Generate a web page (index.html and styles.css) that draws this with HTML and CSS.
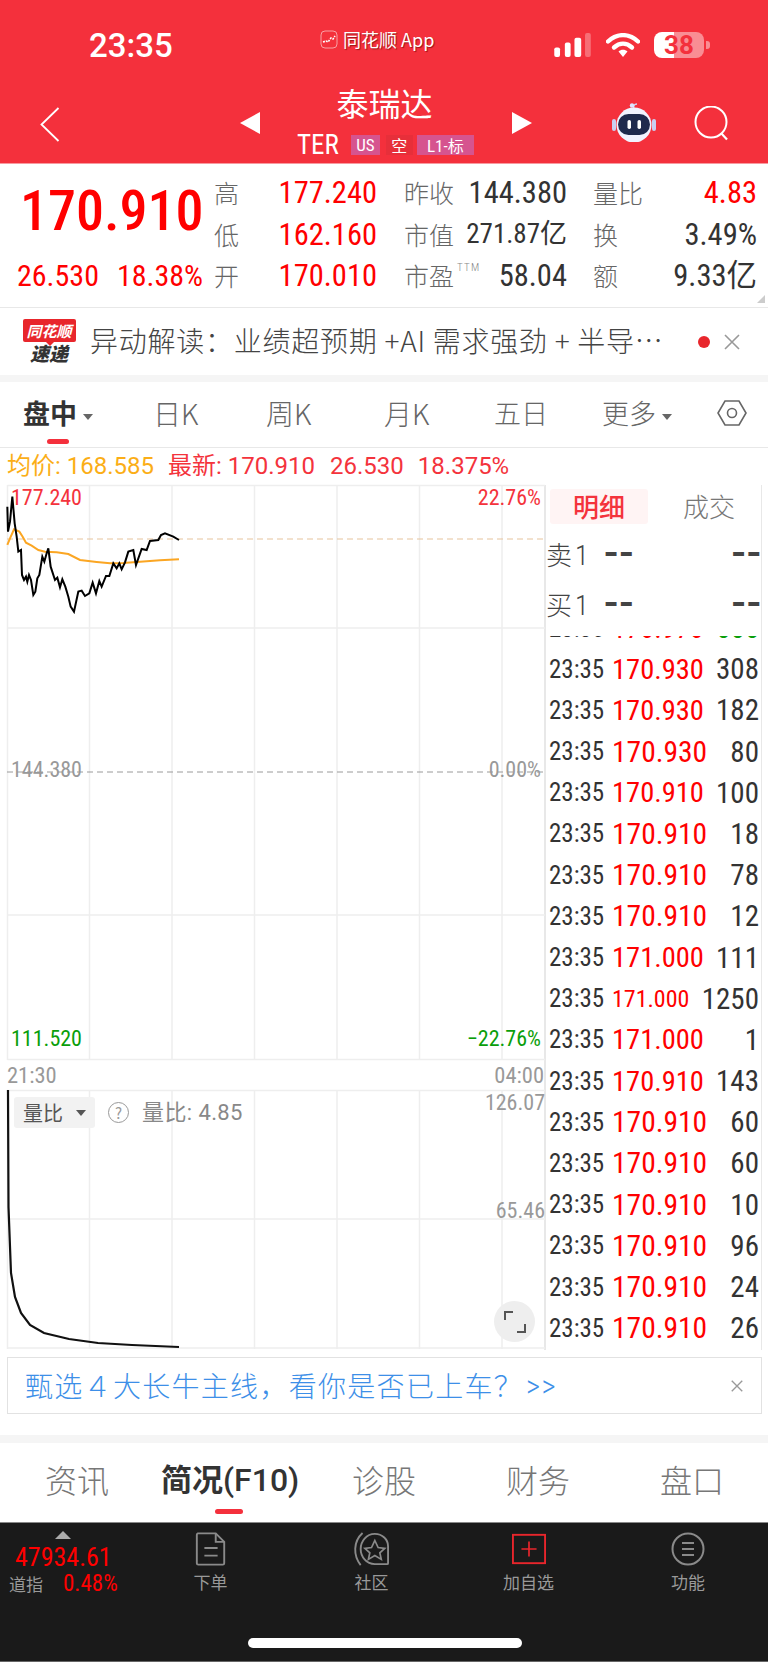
FILE: index.html
```html
<!DOCTYPE html>
<html lang="zh-CN">
<head>
<meta charset="utf-8">
<title>泰瑞达</title>
<link rel="stylesheet" href="styles.css">
</head>
<body>
<div class="phone">
  <header class="top">
    <div class="status">
      <span class="clock num">23:35</span>
      <span class="carrier">
        <svg class="carrier-ico" viewBox="0 0 18 19"><rect x="1" y="1" width="16" height="17" rx="4" fill="#f4303c" stroke="#f7a0a5" stroke-width="1"/><path d="M3 12l3-1 2 1 3-4 2 1 2-3" fill="none" stroke="#fff" stroke-width="1.6" stroke-dasharray="2 1"/></svg>
        <span class="carrier-txt">同花顺 App</span>
      </span>
      <span class="sys">
        <svg class="sig" viewBox="0 0 40 26"><rect x="0" y="15" width="6" height="10" rx="2" fill="#fff"/><rect x="11" y="10" width="6" height="15" rx="2" fill="#fff"/><rect x="21" y="5" width="7" height="20" rx="2" fill="#fff"/><rect x="32" y="0" width="6" height="25" rx="2" fill="#fff" opacity=".3"/></svg>
        <svg class="wifi" viewBox="0 0 34 24"><path d="M2 8.500C11 0 23 0 32 8.500" fill="none" stroke="#fff" stroke-width="4.400" stroke-linecap="round"/><path d="M8 14.500c5.500-5 12.500-5 18 0" fill="none" stroke="#fff" stroke-width="4.400" stroke-linecap="round"/><path d="M12.500 18.500c2.500-2.300 6.500-2.300 9 0L17 24z" fill="#fff"/></svg>
        <span class="batt num">38</span><span class="batt-tip"></span>
      </span>
    </div>
    <div class="nav">
      <svg class="back" viewBox="0 0 20 34"><path d="M18.500 .5L1.500 17l17 16.500" fill="none" stroke="#fff" stroke-width="1.800"/></svg>
      <div class="title-wrap">
        <span class="tri-l"></span>
        <div class="title">
          <div class="name">泰瑞达</div>
          <div class="sub">
            <span class="ter num">TER</span>
            <span class="badge b-us num">US</span>
            <span class="badge b-kong">空</span>
            <span class="badge b-l1"><span class="num">L1-</span>标</span>
          </div>
        </div>
        <span class="tri-r"></span>
      </div>
      <svg class="robot" viewBox="0 0 44 40">
        <path d="M22 7c-1-3 0-5 3-5" fill="none" stroke="#cfd6f5" stroke-width="1.500"/>
        <circle cx="20" cy="3.500" r="2.200" fill="#dfe5ff"/>
        <rect x="0" y="17" width="4" height="12" rx="2" fill="#c9cff2"/>
        <rect x="40" y="17" width="4" height="12" rx="2" fill="#c9cff2"/>
        <circle cx="22" cy="23" r="17.500" fill="#f1f3ff"/>
        <rect x="6" y="12" width="32" height="21" rx="10.500" fill="#1f2a4d"/>
        <rect x="15.500" y="18" width="3.500" height="9" rx="1.700" fill="#fff"/>
        <rect x="25.500" y="18" width="3.500" height="9" rx="1.700" fill="#fff"/>
      </svg>
      <svg class="search" viewBox="0 0 36 36"><circle cx="17" cy="16" r="15.500" fill="none" stroke="#fff" stroke-width="2"/><path d="M27 27l6 6.500" stroke="#fff" stroke-width="2.200" fill="none"/></svg>
    </div>
  </header>

  <section class="stats">
    <div class="big num">170.910</div>
    <div class="chg num"><span>26.530</span><span>18.38%</span></div>
    <div class="cell c1 r1"><span class="lab">高</span><span class="val red num">177.240</span></div>
    <div class="cell c2 r1"><span class="lab">昨收</span><span class="val num">144.380</span></div>
    <div class="cell c3 r1"><span class="lab">量比</span><span class="val red num">4.83</span></div>
    <div class="cell c1 r2"><span class="lab">低</span><span class="val red num">162.160</span></div>
    <div class="cell c2 r2"><span class="lab">市值</span><span class="val val-sm num">271.87亿</span></div>
    <div class="cell c3 r2"><span class="lab">换</span><span class="val num">3.49%</span></div>
    <div class="cell c1 r3"><span class="lab">开</span><span class="val red num">170.010</span></div>
    <div class="cell c2 r3"><span class="lab">市盈<sup class="ttm num">TTM</sup></span><span class="val num">58.04</span></div>
    <div class="cell c3 r3"><span class="lab">额</span><span class="val num">9.33亿</span></div>
    <span class="corner"></span>
  </section>

  <section class="news">
    <div class="logo"><span class="logo-a">同花顺</span><span class="logo-b">速递</span></div>
    <div class="news-txt">异动解读：业绩超预期 +AI 需求强劲 + 半导…</div>
    <span class="dot"></span>
    <svg class="close" viewBox="0 0 16 16"><path d="M1 1l14 14M15 1L1 15" stroke="#999" stroke-width="1.600"/></svg>
  </section>
  <div class="band"></div>

  <nav class="ctabs">
    <span class="ctab on t1">盘中<i class="caret"></i><b class="bar"></b></span>
    <span class="ctab t2">日K</span>
    <span class="ctab t3">周K</span>
    <span class="ctab t4">月K</span>
    <span class="ctab t5">五日</span>
    <span class="ctab t6">更多<i class="caret"></i></span>
    <svg class="hex" viewBox="0 0 30 26"><path d="M8 1h14l7 12-7 12H8L1 13z" fill="none" stroke="#666" stroke-width="1.600"/><circle cx="15" cy="13" r="4.500" fill="none" stroke="#666" stroke-width="1.600"/></svg>
  </nav>

  <div class="legend">
    <span class="amber l1">均价: 168.585</span>
    <span class="rd l2">最新: 170.910</span>
    <span class="rd l3">26.530</span>
    <span class="rd l4">18.375%</span>
  </div>

  <main class="main">
    <div class="charts">
      <div class="price-chart">
        <svg class="chart-svg" viewBox="0 485 538 575">
          <g stroke="#eee" stroke-width="1.500" fill="none">
            <path d="M.5 485.500H538M.5 628H538M.5 915H538M.5 1059.500H538"/>
            <path d="M.5 485V1060M82.500 485V1060M165 485V1060M247.500 485V1060M330 485V1060M412.500 485V1060M495 485V1060"/>
          </g>
          <path d="M0 539H538" stroke="#e6c39c" stroke-width="1" stroke-dasharray="6 4"/>
          <path d="M0 772H538" stroke="#9a9a9a" stroke-width="1" stroke-dasharray="6 4"/>
          <g transform="translate(0 480) scale(.3333) translate(-21 0)">
            <path d="M22 195L30 175L42 148L58 155L68 170L78 188L95 197L115 210L135 215L170 217L205 222L240 240L290 246L330 250L370 249L420 245L480 241L537 238" fill="none" stroke="#fba623" stroke-width="6"/>
            <path d="M22 80L24 155L30 125L37 50L44 130L50 170L55 215L63 210L66 285L72 300L78 290L82 305L87 285L93 300L100 345L106 335L112 295L118 285L127 230L133 245L140 220L145 205L152 260L165 300L172 293L180 322L187 298L196 320L205 350L212 380L222 395L235 335L245 332L255 348L268 340L278 308L288 340L298 303L305 320L318 288L328 288L340 250L350 265L358 250L365 268L375 247L385 215L400 210L408 255L425 207L440 210L450 183L475 180L483 165L495 160L520 170L537 180" fill="none" stroke="#000" stroke-width="6"/>
          </g>
        </svg>
        <span class="pl num rd pl-top">177.240</span>
        <span class="pr num rd pl-top">22.76%</span>
        <span class="pl num gy pl-mid">144.380</span>
        <span class="pr num gy pl-mid">0.00%</span>
        <span class="pl num gr pl-bot">111.520</span>
        <span class="pr num gr pl-bot">−22.76%</span>
      </div>
      <div class="axis num"><span>21:30</span><span>04:00</span></div>
      <div class="vol-chart">
        <svg class="chart-svg" viewBox="0 1090 538 259">
          <g stroke="#eee" stroke-width="1.500" fill="none">
            <path d="M0 1090.500H538M0 1219H538M0 1348H538"/>
            <path d="M.5 1090V1349M82.500 1090V1349M165 1090V1349M247.500 1090V1349M330 1090V1349M412.500 1090V1349M495 1090V1349"/>
          </g>
          <path d="M1 1090L1.500 1207L4 1273L8 1297L14 1313L23 1325L37 1333L62 1339L91 1343L125 1345L172 1347" fill="none" stroke="#111" stroke-width="2.200"/>
        </svg>
        <span class="vselect"><span>量比</span><i class="caret dark"></i></span>
        <span class="vhelp">?</span>
        <span class="vtxt">量比: 4.85</span>
        <span class="vy vy1 num">126.07</span>
        <span class="vy vy2 num">65.46</span>
        <span class="expand"><svg viewBox="0 0 22 22"><path d="M9 1H1v8M13 21h8v-8" fill="none" stroke="#555" stroke-width="2"/></svg></span>
      </div>
    </div>
    <aside class="panel">
      <div class="ptabs"><span class="ptab on">明细</span><span class="ptab">成交</span></div>
      <div class="quote q1"><span class="qlab">卖<span class="num">1</span></span><span class="dash">--</span><span class="dash end">--</span></div>
      <div class="quote q2"><span class="qlab">买<span class="num">1</span></span><span class="dash">--</span><span class="dash end">--</span></div>
      <div class="ticks num">
        <div class="ticks-in">
          <div class="tick"><span class="tm">23:35</span><span class="pr-s">170.970</span><span class="vl gn">555</span></div>
          <div class="tick"><span class="tm">23:35</span><span class="pr-s">170.930</span><span class="vl">308</span></div>
          <div class="tick"><span class="tm">23:35</span><span class="pr-s">170.930</span><span class="vl">182</span></div>
          <div class="tick"><span class="tm">23:35</span><span class="pr-l">170.930</span><span class="vl">80</span></div>
          <div class="tick"><span class="tm">23:35</span><span class="pr-s">170.910</span><span class="vl">100</span></div>
          <div class="tick"><span class="tm">23:35</span><span class="pr-l">170.910</span><span class="vl">18</span></div>
          <div class="tick"><span class="tm">23:35</span><span class="pr-l">170.910</span><span class="vl">78</span></div>
          <div class="tick"><span class="tm">23:35</span><span class="pr-l">170.910</span><span class="vl">12</span></div>
          <div class="tick"><span class="tm">23:35</span><span class="pr-s">171.000</span><span class="vl">111</span></div>
          <div class="tick"><span class="tm">23:35</span><span class="pr-xs">171.000</span><span class="vl">1250</span></div>
          <div class="tick"><span class="tm">23:35</span><span class="pr-s">171.000</span><span class="vl">1</span></div>
          <div class="tick"><span class="tm">23:35</span><span class="pr-s">170.910</span><span class="vl">143</span></div>
          <div class="tick"><span class="tm">23:35</span><span class="pr-l">170.910</span><span class="vl">60</span></div>
          <div class="tick"><span class="tm">23:35</span><span class="pr-l">170.910</span><span class="vl">60</span></div>
          <div class="tick"><span class="tm">23:35</span><span class="pr-l">170.910</span><span class="vl">10</span></div>
          <div class="tick"><span class="tm">23:35</span><span class="pr-l">170.910</span><span class="vl">96</span></div>
          <div class="tick"><span class="tm">23:35</span><span class="pr-l">170.910</span><span class="vl">24</span></div>
          <div class="tick"><span class="tm">23:35</span><span class="pr-l">170.910</span><span class="vl">26</span></div>
        </div>
      </div>
    </aside>
  </main>

  <div class="promo">
    <span class="promo-txt">甄选４大长牛主线，看你是否已上车？<span class="gt num">&gt;&gt;</span></span>
    <svg class="close" viewBox="0 0 16 16"><path d="M2 2l12 12M14 2L2 14" stroke="#999" stroke-width="1.600"/></svg>
  </div>

  <div class="band band2"></div>
  <nav class="btabs">
    <span class="btab b1">资讯</span>
    <span class="btab b2 on">简况<span class="f10 num">(F10)</span><b class="bar2"></b></span>
    <span class="btab b3">诊股</span>
    <span class="btab b4">财务</span>
    <span class="btab b5">盘口</span>
  </nav>

  <footer class="dock">
    <div class="dock-row">
      <div class="index">
        <span class="up"></span>
        <span class="ix-val num">47934.61</span>
        <span class="ix-sub"><span>道指</span><span class="ix-pct num">0.48%</span></span>
      </div>
      <div class="act">
        <svg class="ico" viewBox="0 0 32 36"><path d="M2 1.500h19l9 9V33a1.500 1.500 0 0 1-1.500 1.500h-26A1.500 1.500 0 0 1 1 33V3a1.500 1.500 0 0 1 1-1.500z" fill="none" stroke="#8a8a8a" stroke-width="2"/><path d="M21 1.500V10.500h9M9 17h14M9 25h14" fill="none" stroke="#8a8a8a" stroke-width="2"/></svg>
        <span>下单</span>
      </div>
      <div class="act">
        <svg class="ico" viewBox="0 0 38 36"><path d="M7 35C-1 25 -1 10 9 1" fill="none" stroke="#8a8a8a" stroke-width="2"/><path d="M22 2c8 0 14 6 14 13v18a1 1 0 0 1-1 1H22C13 34 7 26 7 18S13 2 22 2z" fill="none" stroke="#8a8a8a" stroke-width="2"/><path d="M22 9l3.500 7.500 7 .8-5.200 4.700 1.500 7L22 25l-6.800 4 1.500-7-5.200-4.700 7-.8z" fill="none" stroke="#8a8a8a" stroke-width="1.800"/></svg>
        <span>社区</span>
      </div>
      <div class="act">
        <svg class="ico" viewBox="0 0 40 36"><rect x="3" y="3" width="34" height="30" fill="none" stroke="#e8262c" stroke-width="2"/><path d="M20 10v16M12 18h16" stroke="#e8262c" stroke-width="1.800"/></svg>
        <span>加自选</span>
      </div>
      <div class="act">
        <svg class="ico" viewBox="0 0 34 34"><circle cx="17" cy="17" r="15.500" fill="none" stroke="#8a8a8a" stroke-width="2"/><path d="M11 11h12M11 17h12M11 23h12" stroke="#8a8a8a" stroke-width="2"/></svg>
        <span>功能</span>
      </div>
    </div>
    <div class="home"></div>
  </footer>
</div>
</body>
</html>
```

FILE: styles.css
```css
* { box-sizing: border-box; margin: 0; padding: 0; }
html, body { width: 768px; height: 1662px; overflow: hidden; background: #fff; }
body {
  font-family: "Noto Sans CJK SC", "Noto Sans", sans-serif;
  color: #333;
}
.num { font-family: Roboto, "Noto Sans CJK SC", sans-serif; font-stretch: 86%; }
.phone { width: 768px; height: 1662px; display: flex; flex-direction: column; overflow: hidden; }

/* header */
.top { height: 164px; background: #f4303c; border-bottom: 1px solid #f89aa0; color: #fff; flex: none; }
.status { height: 83px; position: relative; display: flex; align-items: flex-start; }
.clock { margin: 26px 0 0 89px; font-size: 33px; line-height: 40px; font-weight: 500; font-stretch: 100%; }
.carrier { position: absolute; left: 320px; top: 29px; display: flex; align-items: center; gap: 5px; height: 20px; text-shadow: 1px 1px 1px rgba(90,0,0,.6); }
.carrier-ico { width: 18px; height: 19px; }
.carrier-txt { font-size: 18px; line-height: 20px; }
.sys { position: absolute; left: 554px; top: 32px; display: flex; align-items: center; }
.sig { width: 39px; height: 25px; margin-top: 1px; }
.wifi { width: 34px; height: 24px; margin-left: 13px; }
.batt { width: 50px; height: 26px; margin-left: 14px; border-radius: 8px; background: linear-gradient(90deg, #fff 40%, rgba(255,255,255,.45) 40%); color: #f4303c; font-size: 26px; font-weight: 700; line-height: 26px; text-align: center; font-stretch: 100%; }
.batt-tip { width: 4px; height: 8px; margin-left: 2px; background: rgba(255,255,255,.45); border-radius: 0 3px 3px 0; }

.nav { height: 80px; display: flex; align-items: flex-start; position: relative; }
.back { width: 20px; height: 35px; margin: 24px 0 0 40px; flex: none; }
.title-wrap { display: flex; align-items: flex-start; margin-left: 180px; width: 292px; flex: none; }
.tri-l, .tri-r { width: 0; height: 0; border-top: 11px solid transparent; border-bottom: 11px solid transparent; margin-top: 29px; flex: none; }
.tri-l { border-right: 20px solid #fff; }
.tri-r { border-left: 20px solid #fff; }
.title { width: 252px; text-align: center; }
.name { font-size: 32px; line-height: 40px; margin: -1px 3px 0 0; }
.sub { display: flex; align-items: center; height: 24px; margin: 11px 0 0 37px; }
.ter { font-size: 27px; line-height: 24px; }
.badge { height: 20px; font-size: 16px; line-height: 20px; display: inline-block; text-align: center; }
.b-us { background: #d6548f; width: 29px; margin-left: 12px; font-size: 17px; }
.b-kong { background: #e72f3a; width: 27px; margin-left: 6px; }
.b-l1 { background: #d6548f; width: 57px; margin-left: 4px; }
.b-l1 .num { font-size: 17px; }
.robot { width: 44px; height: 40px; margin: 19px 0 0 80px; flex: none; }
.search { width: 36px; height: 36px; margin: 23px 0 0 38px; flex: none; }

/* stats */
.stats {
  height: 144px; flex: none; padding-top: 8px; position: relative;
  display: grid;
  grid-template-columns: 214px 163px 163px 163px;
  grid-template-rows: repeat(3, 41.5px);
  border-bottom: 1px solid #e8e8e8;
}
.big { grid-column: 1; grid-row: 1 / 3; color: #f00; font-size: 56px; font-weight: 500; line-height: 83px; padding-left: 20px; margin-top: -2px; }
.chg { grid-column: 1; grid-row: 3; color: #f00; font-size: 30px; line-height: 41.5px; display: flex; gap: 18px; padding-left: 17px; }
.cell { display: flex; justify-content: space-between; align-items: center; line-height: 41.5px; }
.c1 { grid-column: 2; }
.c2 { grid-column: 3; margin-left: 27px; width: 163px; }
.c3 { grid-column: 4; margin-left: 53px; width: 164px; }
.r1 { grid-row: 1; } .r2 { grid-row: 2; } .r3 { grid-row: 3; }
.lab { font-size: 25px; color: #666; font-weight: 300; position: relative; }
.val { font-size: 30.500px; color: #333; }
.val.red { color: #f00; }
.val-sm { font-size: 27px; }
.ttm { position: absolute; left: 53px; top: 6px; font-size: 11px; line-height: 14px; color: #888; letter-spacing: 1.200px; }
.corner { position: absolute; right: 3px; bottom: 4px; width: 0; height: 0; border-left: 8px solid transparent; border-bottom: 8px solid #ccc; }

/* news */
.news { height: 67px; flex: none; display: flex; align-items: center; padding-left: 22px; }
.logo { width: 54px; height: 45px; display: flex; flex-direction: column; align-items: center; flex: none; position: relative; }
.logo::after { content: ""; position: absolute; left: 24px; top: 23px; width: 0; height: 0; border-left: 4px solid transparent; border-right: 4px solid transparent; border-top: 4px solid #e8262c; }
.logo-a { width: 53px; height: 23px; background: #e8262c; color: #fff; font-size: 15px; line-height: 23px; font-weight: 700; font-style: italic; text-align: center; border-radius: 2px; }
.logo-b { font-size: 19px; line-height: 21px; font-weight: 900; color: #333; font-style: italic; }
.news-txt { font-size: 28px; line-height: 40px; color: #444; margin: -3px 0 0 14px; width: 608px; white-space: nowrap; font-weight: 300; letter-spacing: .75px; }
.dot { width: 12px; height: 12px; border-radius: 50%; background: #e8262c; flex: none; }
.news .close { width: 16px; height: 16px; margin-left: 14px; flex: none; }
.band { height: 7px; background: #f5f5f5; flex: none; }
.band2 { height: 8px; margin-top: 21px; }

/* chart tabs */
.ctabs { height: 66px; flex: none; position: relative; display: grid; grid-template-columns: 130px 113px 118px 110px 108px 115px 1fr; align-items: center; border-bottom: 1px solid #e8e8e8; padding-left: 23px; }
.ctab { font-size: 28px; color: #666; font-weight: 300; line-height: 40px; position: relative; margin-top: -3px; white-space: nowrap; }
.ctab.on { font-size: 27px; color: #333; font-weight: 700; }
.t5, .t6 { font-size: 27px; }
.caret { display: inline-block; width: 0; height: 0; border-left: 5.500px solid transparent; border-right: 5.500px solid transparent; border-top: 6px solid #666; margin-left: 6px; vertical-align: 4px; }
.bar { position: absolute; left: 24px; top: 46px; width: 22px; height: 5px; border-radius: 3px; background: #f4303c; }
.hex { width: 30px; height: 26px; margin-top: -3px; }

/* legend */
.legend { height: 37px; flex: none; display: flex; align-items: center; padding-left: 7px; font-size: 24px; line-height: 37px; white-space: nowrap; font-family: Roboto, "Noto Sans CJK SC", sans-serif; }
.amber { color: #fbae17; }
.rd { color: #f4333c; }
.gy { color: #999; }
.gr { color: #0a9e0a; }
.l2 { margin-left: 14px; }
.l3 { margin-left: 15px; }
.l4 { margin-left: 14px; }

/* main */
.main { height: 865px; flex: none; display: flex; margin: 0 6px 0 7px; border-right: 1px solid #e8e8e8; }
.charts { width: 537px; flex: none; display: flex; flex-direction: column; }
.chart-svg { display: block; width: 538px; height: 100%; overflow: visible; }
.price-chart { height: 575px; position: relative; flex: none; }
.axis { height: 30px; flex: none; display: flex; justify-content: space-between; align-items: center; color: #999; font-size: 22.500px; line-height: 30px; }
.vol-chart { height: 259px; position: relative; flex: none; }
.pl, .pr { position: absolute; font-size: 22px; line-height: 24px; }
.pl { left: 4px; }
.pr { right: 3px; }
.pl-top { top: 1px; }
.pl-mid { top: 273px; }
.pl-bot { top: 542px; }
.vselect { position: absolute; left: 7px; top: 7px; width: 81px; height: 31px; background: #f2f2f2; border-radius: 3px; font-size: 20px; line-height: 31px; padding-left: 9px; display: flex; align-items: center; color: #555; }
.caret.dark { border-top-color: #555; margin-left: 13px; }
.vhelp { position: absolute; left: 101px; top: 12px; width: 21px; height: 21px; border-radius: 50%; border: 1px solid #999; color: #999; font-size: 15px; line-height: 19px; text-align: center; }
.vtxt { position: absolute; left: 135px; top: 8px; font-size: 22px; line-height: 30px; color: #888; font-family: Roboto, "Noto Sans CJK SC", sans-serif; letter-spacing: .4px; }
.vy { position: absolute; right: -1px; font-size: 22px; line-height: 24px; color: #999; }
.vy1 { top: 1px; }
.vy2 { top: 109px; }
.expand { position: absolute; left: 487px; top: 211px; width: 41px; height: 41px; border-radius: 50%; background: #eee; display: flex; align-items: center; justify-content: center; }
.expand svg { width: 22px; height: 22px; }

/* panel */
.panel { width: 218px; flex: none; border-left: 2px solid #e8e8e8; display: flex; flex-direction: column; overflow: hidden; }
.ptabs { display: flex; margin: 4px 0 0 4px; height: 36px; flex: none; }
.ptab { width: 98px; height: 35px; font-size: 26px; line-height: 33px; text-align: center; color: #777; border-radius: 3px; font-weight: 300; }
.ptab:last-child { margin-left: 11px; width: 100px; }
.ptab.on { background: #fff4f4; color: #f4333c; font-weight: 500; }
.quote { height: 50px; display: flex; align-items: center; flex: none; position: relative; font-size: 26px; color: #444; }
.q1 { margin-top: 3px; }
.qlab { width: 58px; font-weight: 300; white-space: nowrap; }
.qlab .num { font-size: 28px; margin-left: 3px; }
.dash { font-family: Roboto, sans-serif; font-size: 42px; font-weight: 500; letter-spacing: 1px; line-height: 30px; }
.dash.end { margin-left: auto; }
.ticks { height: 714px; flex: none; overflow: hidden; margin-top: 8px; }
.ticks-in { margin-top: -28.600px; }
.tick { height: 41.200px; display: flex; align-items: center; padding: 0 3px 0 3px; white-space: nowrap; }
.tm { width: 63px; flex: none; font-size: 25px; color: #333; }
.pr-s, .pr-l, .pr-xs { color: #f00; flex: none; }
.pr-s { font-size: 28.500px; }
.pr-l { font-size: 29.500px; }
.pr-xs { font-size: 24px; }
.vl { margin-left: auto; font-size: 29px; color: #333; }
.vl.gn { color: #0a9e0a; }

/* promo */
.promo { height: 57px; flex: none; margin: 7px 6px 0 7px; border: 1px solid #e2e2e2; display: flex; align-items: center; padding-left: 17px; }
.promo-txt { font-size: 28px; line-height: 40px; color: #3d8fe8; font-weight: 300; letter-spacing: 1.300px; white-space: nowrap; width: 705px; }
.gt { font-size: 31px; margin-left: 3px; }
.promo .close { width: 14px; height: 14px; flex: none; }

/* bottom tabs */
.btabs { height: 79px; flex: none; display: grid; grid-template-columns: 116px 191px 154px 154px 1fr; padding-left: 45px; align-items: center; }
.btab { font-size: 32px; color: #777; font-weight: 300; line-height: 44px; position: relative; margin-top: -7px; white-space: nowrap; }
.btab.on { font-size: 31px; color: #333; font-weight: 700; }
.f10 { font-size: 32px; font-weight: 500; font-stretch: 95%; }
.bar2 { position: absolute; left: 54px; top: 53px; width: 28px; height: 5px; border-radius: 3px; background: #f4303c; }

/* dock */
.dock { flex: 1; background: #1a1a1a; border-top: 1px solid #888; border-bottom: 1px solid #666; display: flex; flex-direction: column; }
.dock-row { height: 115px; flex: none; display: grid; grid-template-columns: 130px 161px 161px 153px 166px; }
.index { display: flex; flex-direction: column; padding: 8px 0 0 8px; }
.up { width: 0; height: 0; border-left: 8px solid transparent; border-right: 8px solid transparent; border-bottom: 8px solid #aaa; margin-left: 47px; }
.ix-val { color: #f00; font-size: 26px; line-height: 24px; margin: 6px 0 0 7px; }
.ix-sub { display: flex; align-items: center; font-size: 17px; color: #999; margin: 3px 0 0 1px; line-height: 24px; gap: 20px; }
.ix-pct { color: #f00; font-size: 23px; }
.act { display: flex; flex-direction: column; align-items: center; padding-top: 9px; color: #999; font-size: 17px; line-height: 20px; }
.ico { height: 34px; width: 40px; margin-bottom: 6px; flex: none; }
.home { width: 274px; height: 10px; margin-left: 248px; background: #fff; border-radius: 5px; }
```
